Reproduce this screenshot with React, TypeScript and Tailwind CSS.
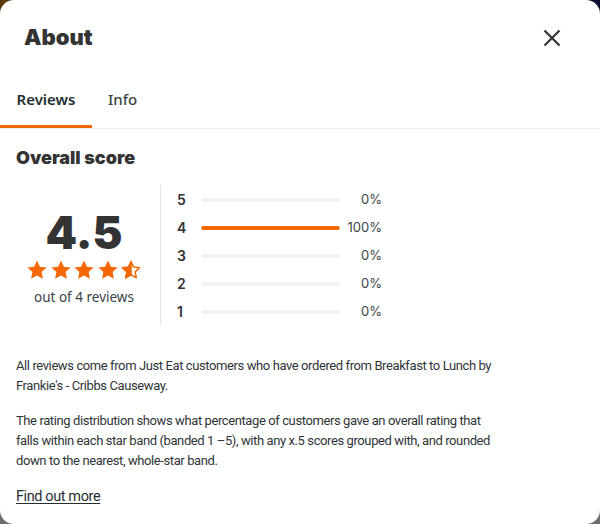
import React from 'react';

const ORANGE = '#f36805';

const rows = [
  { stars: 5, pct: 0 },
  { stars: 4, pct: 100 },
  { stars: 3, pct: 0 },
  { stars: 2, pct: 0 },
  { stars: 1, pct: 0 },
];

const STAR_PATH = 'M10 0.6l2.9 6.1 6.7.8-5 4.6 1.3 6.6L10 15.4l-5.9 3.3 1.3-6.6-5-4.6 6.7-.8z';

const Star: React.FC<{ half?: boolean }> = ({ half }) => (
  <svg width="20" height="20" viewBox="0 0 20 20">
    {half ? (
      <>
        <defs>
          <clipPath id="halfClip">
            <rect x="0" y="0" width="10.8" height="20" />
          </clipPath>
        </defs>
        <path d={STAR_PATH} fill="none" stroke={ORANGE} strokeWidth="1.7" strokeLinejoin="round" transform="translate(10 10) scale(0.9) translate(-10 -10)" />
        <path d={STAR_PATH} fill={ORANGE} clipPath="url(#halfClip)" />
      </>
    ) : (
      <path d={STAR_PATH} fill={ORANGE} />
    )}
  </svg>
);

export default function App() {
  return (
    <div className="w-[600px] h-[524px] bg-[conic-gradient(#0b0b30_0deg_90deg,#6e6e6e_90deg_270deg,#5c3a10_270deg_360deg)]">
      <div className="w-full h-full bg-white rounded-[14px] overflow-hidden flex flex-col text-[#242e30] font-['Roboto',sans-serif]">
        {/* header */}
        <div className="flex items-center justify-between pl-6 pr-[39px] h-[74px]">
          <h1 className="font-['Inter',sans-serif] font-black text-[22px] text-[#333]">About</h1>
          <button className="w-[18px] h-[18px] text-[#333] mt-[1px]">
            <svg width="18" height="18" viewBox="0 0 18 18" fill="none" stroke="currentColor" strokeWidth="2.2">
              <path d="M1.5 1.5l15 15M16.5 1.5l-15 15" />
            </svg>
          </button>
        </div>

        {/* tabs */}
        <div className="flex border-b border-[#ececec] h-[55px]">
          <div className="w-[92px] flex items-center justify-center border-b-[3px] border-[#f36805] text-[15px] font-semibold font-['Noto_Sans',sans-serif]">Reviews</div>
          <div className="px-4 flex items-center text-[15px] font-medium font-['Noto_Sans',sans-serif] text-[#3a4446] pb-[3px]">Info</div>
        </div>

        <div className="px-4 pt-[18px]">
          <h2 className="font-['Inter',sans-serif] font-black text-[18px] leading-[22px] text-[#333]">Overall score</h2>

          <div className="flex mt-[16px] h-[140px]">
            <div className="w-[136px] flex flex-col items-center pt-[25px]">
              <div className="font-['Inter',sans-serif] font-black text-[45px] leading-[46px] text-[#333]">4.5</div>
              <div className="flex gap-[3.5px] mt-[4px]">
                <Star />
                <Star />
                <Star />
                <Star />
                <Star half />
              </div>
              <div className="text-[13.5px] mt-[7px] text-[#3a4446] font-['Noto_Sans',sans-serif]">out of 4 reviews</div>
            </div>
            <div className="ml-2 border-l border-[#e6e6e6] pl-4 flex flex-col justify-center gap-[12px] pt-[1px]">
              {rows.map(r => (
                <div key={r.stars} className="flex items-center h-[16px] font-['Inter',sans-serif]">
                  <span className="w-[24px] text-[14px] font-semibold text-[#333]">{r.stars}</span>
                  <div className="w-[139px] h-[4px] rounded-full bg-[#f5f3f1] overflow-hidden">
                    <div className="h-full rounded-full bg-[#f36805]" style={{ width: `${r.pct}%` }} />
                  </div>
                  <span className="w-[42px] text-right text-[13px] text-[#3a4446]">{r.pct}%</span>
                </div>
              ))}
            </div>
          </div>

          <div className="max-w-[490px] text-[13px] leading-[20px] tracking-[-0.4px] text-[#2f3537]">
            <p className="mt-[31px]">
              All reviews come from Just Eat customers who have ordered from Breakfast to Lunch by Frankie's - Cribbs Causeway.
            </p>
            <p className="mt-[15px]">
              The rating distribution shows what percentage of customers gave an overall rating that falls within each star band (banded 1 –5), with any x.5 scores grouped with, and rounded down to the nearest, whole-star band.
            </p>
          </div>
          <a href="#" className="inline-block mt-[15px] text-[14.5px] tracking-[-0.4px] underline underline-offset-2 text-[#242e30]">Find out more</a>
        </div>
      </div>
    </div>
  );
}
